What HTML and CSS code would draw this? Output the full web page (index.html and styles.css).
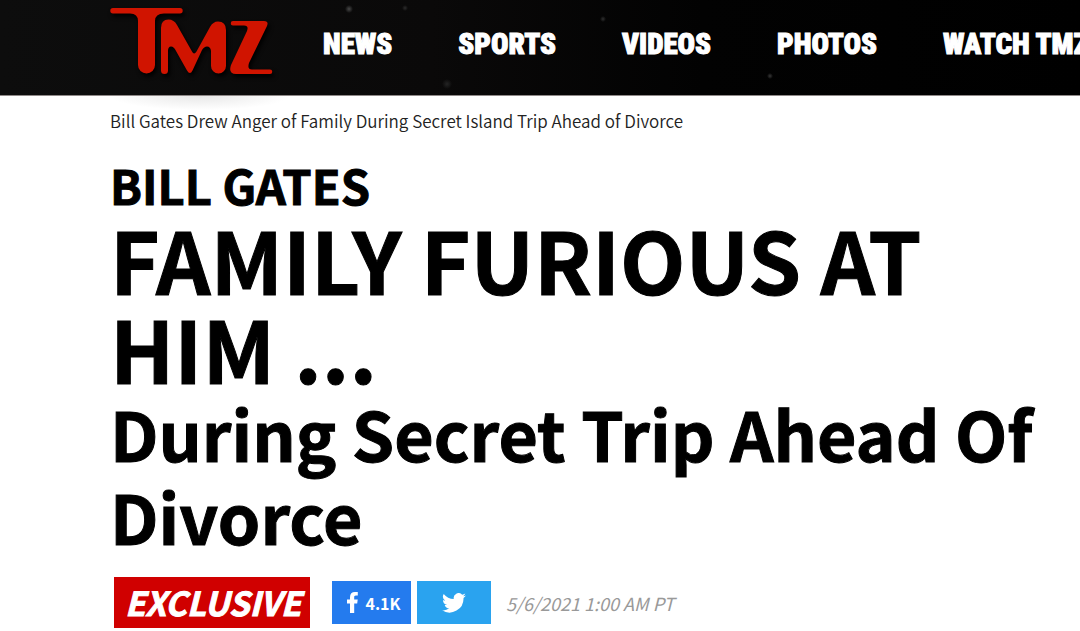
FILE: index.html
```
<!DOCTYPE html>
<html lang="en">
<head>
<meta charset="utf-8">
<meta name="viewport" content="width=device-width, initial-scale=1">
<title>TMZ</title>
<link rel="stylesheet" href="styles.css">
</head>
<body>
<header class="site-header">
  <a class="logo" href="#" aria-label="TMZ">
    <svg class="logo-art" viewBox="0 0 164 70" aria-hidden="true">
      <path d="M3 0H70a2.7 2.7 0 0 1 0 5.400H54Q45 5.400 45 13V57a8.500 8.500 0 0 1-17 0V13Q28 5.400 20 5.400H3a2.700 2.700 0 0 1 0-5.400Z"/>
      <path d="M51 20Q51 11.500 58.500 11.500Q64 11.500 67 17L82 43.500Q84 47.500 86.500 43.500L100 19Q103 13.500 108 13.500Q116 13.500 116 22V58a7.500 7.500 0 0 1-15 0V43Q100.500 38.500 97 38.500Q94 38.500 92 42L82.500 62.500Q80 67.500 77 62.500L66 43Q64 38.500 61 38.500Q58 38.500 58 43V62.500a3.500 3.500 0 0 1-7 0Z"/>
      <path d="M123 13H154Q159 13 157 18L139 55Q137 61.500 142 61.500H160a2.200 2.200 0 0 1 0 4.500H126Q118 66 121 57L137 23Q139 17.500 134 17.500H123a2.200 2.200 0 0 1 0-4.500Z"/>
    </svg>
  </a>
  <nav class="main-nav" aria-label="Main">
    <a href="#">NEWS</a>
    <a href="#">SPORTS</a>
    <a href="#">VIDEOS</a>
    <a href="#">PHOTOS</a>
    <a href="#">WATCH TMZ</a>
  </nav>
</header>
<main class="article">
  <p class="breadcrumb">Bill Gates Drew Anger of Family During Secret Island Trip Ahead of Divorce</p>
  <h1 class="headline">
    <span class="kicker">BILL GATES</span>
    <span class="title">FAMILY FURIOUS AT<br>HIM ...</span>
    <span class="subtitle">During Secret Trip Ahead Of<br>Divorce</span>
  </h1>
  <div class="meta">
    <span class="tag">EXCLUSIVE</span>
    <div class="share">
      <button class="share-button facebook" type="button" aria-label="Share on Facebook, 4.1K shares">
        <svg class="facebook-icon" viewBox="0 0 11 21" aria-hidden="true"><path d="M3 21V11.500H0V7.500H3V5.500C3 1.800 4.800 0 8 0h2.800v3.600H9C7.500 3.600 7.200 4.300 7.200 5.500v2h3.500l-.5 4h-3V21Z"/></svg>
        4.1K
      </button>
      <button class="share-button twitter" type="button" aria-label="Share on Twitter">
        <svg class="twitter-icon" viewBox="0 0 24 20" aria-hidden="true"><path d="M24 2.400a10 10 0 0 1-2.800.8A5 5 0 0 0 23.300.5a10 10 0 0 1-3.100 1.200A4.900 4.900 0 0 0 11.800 6.100 14 14 0 0 1 1.700 1a4.900 4.900 0 0 0 1.500 6.500A5 5 0 0 1 1 6.900a4.900 4.900 0 0 0 3.900 4.900 5 5 0 0 1-2.200.1 4.900 4.900 0 0 0 4.600 3.400A10 10 0 0 1 0 17.300a14 14 0 0 0 21.500-12.400A10 10 0 0 0 24 2.400Z"/></svg>
      </button>
    </div>
    <time class="date" datetime="2021-05-06T01:00">5/6/2021 1:00 AM PT</time>
  </div>
</main>
</body>
</html>
```
FILE: styles.css
```
* {
  box-sizing: border-box;
}

body {
  margin: 0;
  overflow-x: hidden;
  background: #fff;
  color: #000;
  font-family: "Noto Sans CJK SC", "Open Sans", sans-serif;
}

.site-header {
  display: flex;
  align-items: flex-start;
  gap: 49px;
  height: 96px;
  padding-left: 110px;
  overflow: hidden;
  border-bottom: 1px solid #8f8988;
  background:
    radial-gradient(circle at 349px 9px, #484848 0, transparent 4px),
    radial-gradient(circle at 405px 8px, #2c2c2c 0, transparent 3px),
    radial-gradient(circle at 447px 84px, #242424 0, transparent 5px),
    radial-gradient(circle at 603px 19px, #303030 0, transparent 3px),
    radial-gradient(circle at 770px 76px, #383838 0, transparent 3px),
    linear-gradient(90deg, #0d0d0d, #0a0909 40%, #020202 65%, #000);
}

.logo {
  flex: none;
  padding-top: 8px;
}

.logo-art {
  display: block;
  width: 164px;
  height: 70px;
  overflow: visible;
  fill: #d01400;
  filter: drop-shadow(2px 3px 2px #000);
}

.main-nav {
  display: flex;
  flex: none;
  gap: 66px;
  padding-top: 24px;
}

.main-nav a {
  color: #fff;
  font: 900 29px/40px "Liberation Sans Narrow", "Roboto Condensed", "Open Sans Condensed", sans-serif;
  text-decoration: none;
  white-space: nowrap;
  -webkit-text-stroke: 1px #fff;
}

.article {
  padding: 13px 24px 0 110px;
  background: radial-gradient(ellipse 90px 14px at 200px 0, #e8e8e8, transparent);
}

.breadcrumb {
  margin: 0;
  color: #222;
  font-size: 17px;
  font-weight: 350;
  line-height: 24px;
}

.headline {
  margin: 24px 0 0;
  font-weight: 700;
}

.headline span {
  display: block;
  white-space: nowrap;
}

.kicker {
  font-size: 47px;
  line-height: 56px;
  -webkit-text-stroke: 1px #000;
}

.title {
  font-size: 85px;
  line-height: 89px;
  -webkit-text-stroke: 1px #000;
}

.subtitle {
  font-size: 68px;
  line-height: 83px;
  -webkit-text-stroke: 1px #000;
}

.meta {
  display: flex;
  align-items: center;
  margin-top: 20px;
  padding-left: 4px;
}

.tag {
  padding: 0 9px 0 11px;
  background: #d00000;
  color: #fff;
  font-size: 33px;
  font-style: italic;
  font-weight: 700;
  line-height: 51px;
  -webkit-text-stroke: 1px #fff;
}

.share {
  display: flex;
  gap: 6px;
  margin-left: 22px;
}

.share-button {
  display: flex;
  align-items: center;
  justify-content: center;
  gap: 7px;
  height: 43px;
  padding: 0;
  border: 0;
  color: #fff;
  font: inherit;
  font-size: 16px;
  font-weight: 700;
}

.facebook {
  width: 79px;
  padding-left: 5px;
  background: #247bee;
}

.twitter {
  width: 74px;
  background: #2aa3ef;
}

.facebook-icon {
  width: 11px;
  height: 21px;
  fill: #fff;
}

.twitter-icon {
  width: 24px;
  height: 20px;
  fill: #fff;
}

.date {
  margin-left: 15px;
  color: #999;
  font-size: 18px;
  font-style: italic;
  line-height: 24px;
}
```
